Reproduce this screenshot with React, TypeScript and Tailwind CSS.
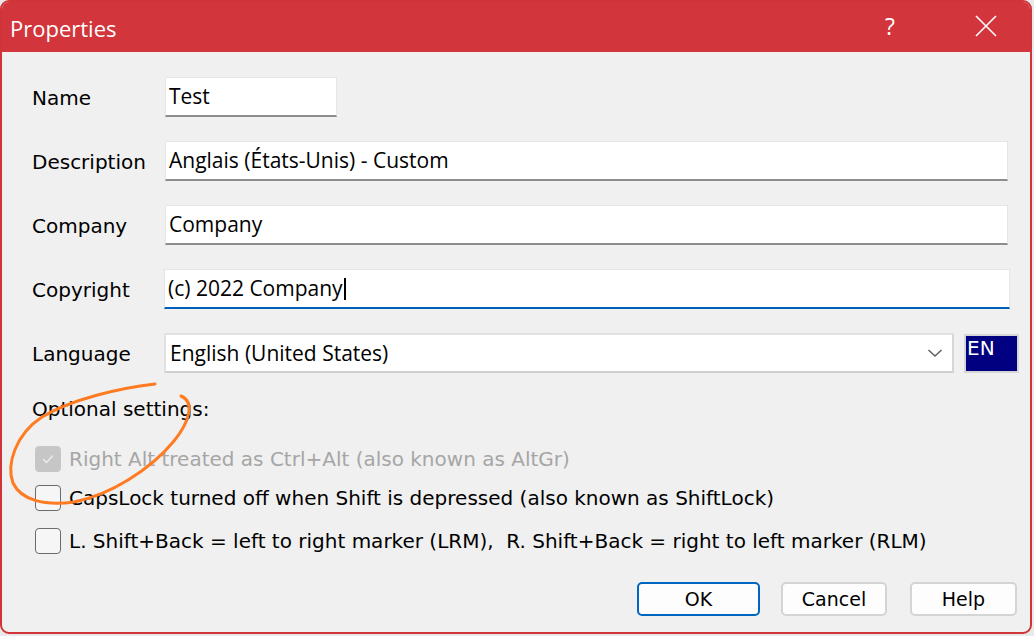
import React from "react";

const label = "font-['DejaVu_Sans',sans-serif] text-[20px] text-black";
const inputText = "font-['Open_Sans',sans-serif] text-[21px] text-black";

function TextBox({ value, width, focused, caret }: { value: string; width: string; focused?: boolean; caret?: boolean }) {
  return (
    <div
      className={
        "h-[40px] bg-white border border-[#e6e6e6] border-b-2 flex items-center pl-[3px] " +
        width +
        (focused ? " border-b-[#005fb8]" : " border-b-[#8c8c8c]")
      }
    >
      <span className={inputText + " leading-none whitespace-nowrap"}>{value}</span>
      {caret && <span className="w-[2px] h-[22px] bg-black ml-[1px]" />}
    </div>
  );
}

function Row({ name, children }: { name: string; children: React.ReactNode }) {
  return (
    <div className="flex items-center">
      <div className={label + " w-[133px] pt-[2px] leading-[24px]"}>{name}</div>
      {children}
    </div>
  );
}

function Check({ checked, disabled, text }: { checked?: boolean; disabled?: boolean; text: string }) {
  return (
    <div className="flex items-center h-[26px]">
      <div
        className={
          "ml-[3px] w-[26px] h-[26px] rounded-[4px] flex items-center justify-center shrink-0 " +
          (disabled ? "bg-[#c6c6c6] border border-[#c6c6c6]" : "bg-[#f6f6f6] border-[1.5px] border-[#6b6b6b]")
        }
      >
        {checked && (
          <svg width="16" height="16" viewBox="0 0 16 16">
            <path d="M3.5 8.5 L6.5 11.5 L12.5 5" fill="none" stroke="#ececec" strokeWidth="1.6" strokeLinecap="round" strokeLinejoin="round" />
          </svg>
        )}
      </div>
      <span
        className={
          "ml-[8px] font-['DejaVu_Sans',sans-serif] text-[20px] leading-[26px] whitespace-pre " + (disabled ? "text-[#a6a6a6]" : "text-black")
        }
      >
        {text}
      </span>
    </div>
  );
}

function Btn({ text, width, primary }: { text: string; width: string; primary?: boolean }) {
  return (
    <div
      className={
        "h-[34px] rounded-[5px] bg-[#fdfdfd] flex items-center justify-center font-['DejaVu_Sans',sans-serif] text-[19px] leading-[24px] text-black shrink-0 " +
        width +
        (primary ? " border-2 border-[#0067c0]" : " border-2 border-[#d4d4d4]")
      }
    >
      {text}
    </div>
  );
}

export default function App() {
  return (
    <div className="w-[1034px] h-[636px] bg-[#e9e9e9] relative overflow-hidden">
      <div className="w-[1032px] h-[634px] border-2 border-[#d13438] rounded-[9px] overflow-hidden flex flex-col bg-[#f0f0f0]">
        {/* Title bar */}
        <div className="h-[50px] bg-[#d2353b] flex items-center shrink-0">
          <span className="ml-[8px] font-['Open_Sans',sans-serif] text-[22px] text-white leading-none mt-[2px]">Properties</span>
          <div className="flex-1" />
          <span className="font-['Open_Sans',sans-serif] text-[23px] text-white leading-none mr-[80px] mt-[-2px]">?</span>
          <svg width="22" height="22" viewBox="0 0 22 22" className="mr-[33px] mt-[-2px]">
            <path d="M1 1 L21 21 M21 1 L1 21" stroke="white" strokeWidth="1.6" fill="none" />
          </svg>
        </div>

        {/* Body */}
        <div className="flex flex-col pl-[30px] pt-[25px]">
          <div className="flex flex-col gap-[24px]">
            <Row name="Name">
              <TextBox value="Test" width="w-[172px]" />
            </Row>
            <Row name="Description">
              <TextBox value="Anglais (États-Unis) - Custom" width="w-[843px]" />
            </Row>
            <Row name="Company">
              <TextBox value="Company" width="w-[843px]" />
            </Row>
            <Row name="Copyright">
              <div className="ml-[-1px]">
                <TextBox value="(c) 2022 Company" width="w-[846px]" focused caret />
              </div>
            </Row>
            <Row name="Language">
              <div className="ml-[-1px] flex items-center">
                <div className="w-[790px] h-[40px] bg-white border-2 border-[#e2e2e2] border-b-[#cfcfcf] border-r-[#d6d6d6] flex items-center pl-[4px]">
                  <span className={inputText + " leading-none flex-1"}>English (United States)</span>
                  <svg width="16" height="10" viewBox="0 0 16 10" className="mr-[9px]">
                    <path d="M1.5 2 L8 8 L14.5 2" fill="none" stroke="#5f5f5f" strokeWidth="1.5" />
                  </svg>
                </div>
                <div className="ml-[10px] w-[55px] h-[39px] border-2 border-[#d6d6d6] bg-[#000080] flex items-start pl-[1px] pt-[1px]">
                  <span className="font-['DejaVu_Sans',sans-serif] text-[20px] text-white leading-[22px]">EN</span>
                </div>
              </div>
            </Row>
          </div>

          <div className={label + " mt-[24px] leading-[24px]"}>Optional settings:</div>

          <div className="mt-[25px]">
            <Check checked disabled text="Right Alt treated as Ctrl+Alt (also known as AltGr)" />
          </div>
          <div className="mt-[13px]">
            <Check text="CapsLock turned off when Shift is depressed (also known as ShiftLock)" />
          </div>
          <div className="mt-[17px]">
            <Check text="L. Shift+Back = left to right marker (LRM),  R. Shift+Back = right to left marker (RLM)" />
          </div>

          <div className="flex mt-[28px] pl-[605px] gap-[21px]">
            <Btn text="OK" width="w-[123px]" primary />
            <Btn text="Cancel" width="w-[106px]" />
            <div className="ml-[2px]">
              <Btn text="Help" width="w-[107px]" />
            </div>
          </div>
        </div>
      </div>

      {/* Orange annotation */}
      <svg className="absolute left-0 top-0 pointer-events-none" width="1034" height="636" viewBox="0 0 1034 636">
        <path
          d="M155 384 C120 388 72 399 42 417 C16 434 6 464 13 483 C21 500 44 506 74 502 C110 495 150 470 174 441 C190 421 195 402 181 396"
          fill="none"
          stroke="#ff7b22"
          strokeWidth="3"
          strokeLinecap="round"
        />
      </svg>
    </div>
  );
}
